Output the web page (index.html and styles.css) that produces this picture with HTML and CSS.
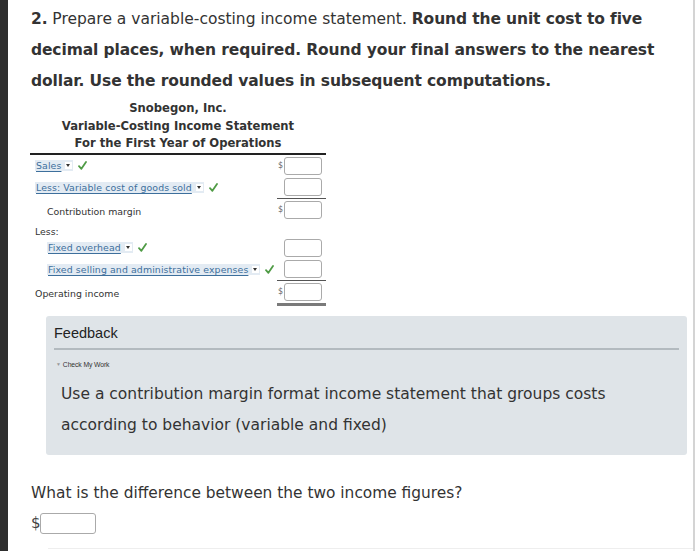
FILE: index.html
```html
<!DOCTYPE html>
<html>
<head>
<meta charset="utf-8">
<link rel="stylesheet" href="styles.css">
</head>
<body>
<div class="page">
  <div class="leftbar"></div>
  <div class="content">
    <p class="question"><b>2.</b> Prepare a variable-costing income statement. <b>Round the unit cost to five decimal places, when required. Round your final answers to the nearest dollar. Use the rounded values in subsequent computations.</b></p>

    <div class="statement">
      <div class="title">
        <div>Snobegon, Inc.</div>
        <div>Variable-Costing Income Statement</div>
        <div>For the First Year of Operations</div>
      </div>

      <div class="row">
        <div class="label"><span class="dd">Sales<span class="arrow"></span></span><svg class="check" viewBox="0 0 9 9"><path d="M1 5.2 L3.4 7.8 L8 1"/></svg></div>
        <div class="amt"><span class="dol">$</span><span class="box"></span></div>
      </div>
      <div class="row">
        <div class="label"><span class="dd">Less: Variable cost of goods sold<span class="arrow"></span></span><svg class="check" viewBox="0 0 9 9"><path d="M1 5.2 L3.4 7.8 L8 1"/></svg></div>
        <div class="amt under"><span class="dol"></span><span class="box"></span></div>
      </div>
      <div class="row">
        <div class="label ind low">Contribution margin</div>
        <div class="amt"><span class="dol">$</span><span class="box"></span></div>
      </div>
      <div class="row short">
        <div class="label">Less:</div>
        <div class="amt"></div>
      </div>
      <div class="row">
        <div class="label ind"><span class="dd">Fixed overhead<span class="arrow"></span></span><svg class="check" viewBox="0 0 9 9"><path d="M1 5.2 L3.4 7.8 L8 1"/></svg></div>
        <div class="amt"><span class="dol"></span><span class="box"></span></div>
      </div>
      <div class="row">
        <div class="label ind"><span class="dd">Fixed selling and administrative expenses<span class="arrow"></span></span><svg class="check" viewBox="0 0 9 9"><path d="M1 5.2 L3.4 7.8 L8 1"/></svg></div>
        <div class="amt under"><span class="dol"></span><span class="box"></span></div>
      </div>
      <div class="row last">
        <div class="label low">Operating income</div>
        <div class="amt double"><span class="dol">$</span><span class="box"></span></div>
      </div>
    </div>

    <div class="feedback">
      <div class="fb-head">Feedback</div>
      <div class="fb-check"><span class="tri">▼</span>Check My Work</div>
      <p class="fb-text">Use a contribution margin format income statement that groups costs according to behavior (variable and fixed)</p>
    </div>

    <p class="q2">What is the difference between the two income figures?</p>
    <div class="answer"><span class="dol2">$</span><span class="box2"></span></div>
    <div class="bottomline"></div>
  </div>
</div>
</body>
</html>
```

FILE: styles.css
```css
html, body {
  margin: 0;
  padding: 0;
  background: #ffffff;
}
.page {
  display: flex;
  width: 700px;
  height: 551px;
  overflow: hidden;
}
.leftbar {
  width: 8px;
  background: #2e2e2e;
  flex: none;
}
.content {
  width: 687px;
  flex: none;
  border-right: 2px solid #d4d4d4;
  padding-left: 23px;
  box-sizing: border-box;
  font-family: "DejaVu Sans", Verdana, sans-serif;
  color: #333;
}
.question {
  margin: 4px 0 0 0;
  font-size: 15.5px;
  line-height: 31px;
  width: 640px;
}
.question b {
  font-weight: bold;
  letter-spacing: -0.12px;
}
.statement {
  width: 296px;
  margin-top: 3px;
  margin-left: -1px;
}
.title {
  text-align: center;
  font-weight: bold;
  font-size: 11.6px;
  line-height: 17.5px;
  border-bottom: 2px solid #222;
}
.row {
  display: grid;
  grid-template-columns: 1fr 49px;
  height: 22px;
  align-items: center;
  font-size: 9.4px;
}
.row.short {
  height: 16px;
}
.row.last {
  height: 25px;
  align-items: start;
}
.label {
  padding-left: 5px;
  display: flex;
  align-items: center;
  white-space: nowrap;
}
.label.low {
  padding-top: 3px;
}
.row.last .label.low {
  padding-top: 7px;
}
.label.ind {
  padding-left: 17px;
}
.dd {
  color: #3d6f9c;
  background: #e3ebf3;
  text-decoration: underline;
  text-underline-offset: 2px;
  display: inline-flex;
  align-items: center;
  padding: 0 1px;
  letter-spacing: 0.1px;
}
.arrow {
  display: inline-block;
  box-sizing: border-box;
  width: 7px;
  height: 7px;
  margin-left: 4px;
  background: #fff;
  position: relative;
}
.arrow::after {
  content: "";
  position: absolute;
  left: 1px;
  top: 2px;
  border-left: 2.5px solid transparent;
  border-right: 2.5px solid transparent;
  border-top: 3px solid #333;
}
.check {
  width: 9px;
  height: 9px;
  margin-left: 5px;
  fill: none;
  stroke: #4f9b45;
  stroke-width: 1.8;
  stroke-linecap: round;
  stroke-linejoin: round;
}
.amt {
  display: flex;
  align-items: center;
  height: 22px;
  box-sizing: border-box;
}
.amt.under {
  border-bottom: 1px solid #555;
}
.amt.double {
  border-bottom: 3px solid #7a7a7a;
  height: 25px;
}
.dol {
  width: 6px;
  font-size: 8px;
  color: #666;
  text-align: left;
  padding-left: 1px;
}
.box {
  width: 36px;
  height: 16px;
  border: 1px solid #aaa;
  border-radius: 3px;
  background: #fff;
}
.feedback {
  width: 641px;
  margin-top: 10px;
  margin-left: 15px;
  height: 139px;
  box-sizing: border-box;
  background: #dfe4e8;
  border-radius: 3px;
  padding: 8px 8px 0 8px;
}
.fb-head {
  font-family: "Liberation Sans", Arial, sans-serif;
  font-size: 14.5px;
  color: #222;
  height: 24px;
  line-height: 18px;
  border-bottom: 2px solid #b3babf;
}
.fb-check {
  font-family: "Liberation Sans", Arial, sans-serif;
  font-size: 6.8px;
  color: #333;
  margin-top: 11px;
  padding-left: 2px;
  letter-spacing: -0.1px;
}
.tri {
  font-size: 5px;
  color: #999;
  margin-right: 2px;
  vertical-align: 1px;
}
.fb-text {
  margin: 11px 0 0 7px;
  font-size: 15.5px;
  line-height: 31px;
  color: #333;
  width: 560px;
}
.q2 {
  margin: 22px 0 0 0;
  font-size: 15.4px;
  line-height: 32px;
  color: #333;
}
.answer {
  display: flex;
  align-items: center;
  margin-top: 4px;
  height: 21px;
}
.dol2 {
  font-size: 15px;
  color: #444;
  width: 9px;
}
.box2 {
  width: 54px;
  height: 19px;
  border: 1px solid #aaa;
  border-radius: 3px;
}
.bottomline {
  margin-top: 14px;
  margin-left: 17px;
  height: 1px;
  background: #eee;
}
```
